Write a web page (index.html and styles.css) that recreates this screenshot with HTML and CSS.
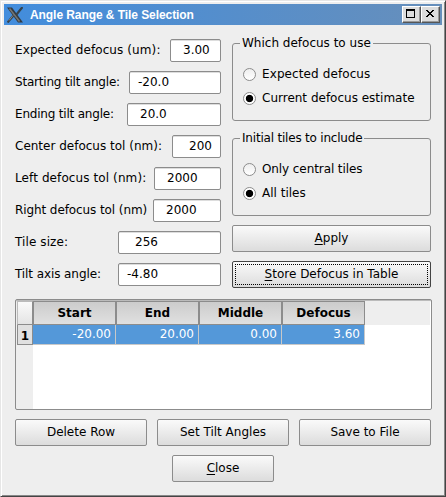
FILE: index.html
```html
<!DOCTYPE html>
<html lang="en">
<head>
<meta charset="utf-8">
<title>Angle Range &amp; Tile Selection</title>
<link rel="stylesheet" href="styles.css">
</head>
<body>
<div class="window">
  <header class="titlebar">
    <svg class="logo" width="16" height="16" viewBox="0 0 16 16">
      <path d="M0 0.5h5L16 15.5h-5z" fill="#333b43"/>
      <path d="M15.5 0L9.5 7.5M6.5 8.5L0.5 15.5" stroke="#36434e" stroke-width="2.2"/>
      <path d="M2.5 1.5L12.5 14.5" stroke="#777773" stroke-width="1.5"/>
      <path d="M6 8.5L2 13.5" stroke="#8b8880" stroke-width="1"/>
    </svg>
    <h1 class="title"><span>Angle Range &amp; Tile Selection</span></h1>
    <div class="controls">
      <span class="control"><svg width="16" height="14" viewBox="0 0 16 14"><path d="M3 2h9v9H3zM4 4v6h7V4z" fill="#000" fill-rule="evenodd"/></svg></span>
      <span class="control"><svg width="16" height="14" viewBox="0 0 16 14"><path d="M4 3h2v1h1v1h2V4h1V3h2v1h-1v1h-1v1H9v1h1v1h1v1h1v1h-2V9H9V8H7v1H6v1H4V9h1V8h1V7h1V6H6V5H5V4H4z" fill="#000"/></svg></span>
    </div>
  </header>
  <main class="content">
    <div class="top">
      <div class="fields">
        <div class="field"><label class="wide">Expected defocus (um):</label><span class="input w51 p12">3.00</span></div>
        <div class="field"><label class="tight">Starting tilt angle:</label><span class="input w92 p8">-20.0</span></div>
        <div class="field"><label class="tight">Ending tilt angle:</label><span class="input w94 p12">20.0</span></div>
        <div class="field"><label>Center defocus tol (nm):</label><span class="input w49 p16">200</span></div>
        <div class="field"><label class="wide">Left defocus tol (nm):</label><span class="input w67 p12">2000</span></div>
        <div class="field"><label class="snug">Right defocus tol (nm)</label><span class="input w68 p12">2000</span></div>
        <div class="field"><label class="wide">Tile size:</label><span class="input w103 p16">256</span></div>
        <div class="field"><label class="snug">Tilt axis angle:</label><span class="input w103 p8">-4.80</span></div>
      </div>
      <div class="options">
        <fieldset class="group">
          <legend>Which defocus to use</legend>
          <div class="radio wide"><i class="dot"></i>Expected defocus</div>
          <div class="radio"><i class="dot on"></i>Current defocus estimate</div>
        </fieldset>
        <fieldset class="group">
          <legend class="tight">Initial tiles to include</legend>
          <div class="radio snug"><i class="dot"></i>Only central tiles</div>
          <div class="radio"><i class="dot on"></i>All tiles</div>
        </fieldset>
        <div class="button"><span><u>A</u>pply</span></div>
        <div class="button focused"><span><u>S</u>tore Defocus in Table</span></div>
      </div>
    </div>
    <div class="table">
      <div class="row head"><b class="corner"></b><b>Start</b><b>End</b><b>Middle</b><b>Defocus</b><i></i></div>
      <div class="row data"><b>1</b><span>-20.00</span><span>20.00</span><span>0.00</span><span>3.60</span></div>
    </div>
    <div class="actions">
      <div class="button">Delete Row</div>
      <div class="button">Set Tilt Angles</div>
      <div class="button">Save to File</div>
    </div>
    <div class="button close"><span><u>C</u>lose</span></div>
  </main>
</div>
</body>
</html>
```
FILE: styles.css
```css
* { box-sizing: border-box; }
body { margin: 0; font: 12px/14px "DejaVu Sans", sans-serif; color: #000; }
.window {
  width: 446px; height: 497px; padding: 2px; background: #eee;
  border: 1px solid #e6e6e6; border-right-color: #444; border-bottom-color: #444;
  box-shadow: inset 1px 1px #fff, inset -1px -1px #888;
}
.titlebar {
  display: flex; align-items: center; height: 21px; margin: 1px 1px 0;
  padding: 0 2px 0 3px; background: linear-gradient(90deg, #428ddd, #678fbb);
}
.logo { margin-top: 1px; }
.title { margin: 1px 0 0 7px; flex: 1; font: bold 12px/14px "Liberation Sans", sans-serif; letter-spacing: -0.07px; color: #fff; white-space: nowrap; }
.controls { display: flex; }
.control {
  width: 19px; height: 17px; background: #dcdcdc; border: 1px solid #fff;
  border-right-color: #555; border-bottom-color: #555; box-shadow: inset -1px -1px #999;
}
.control svg { display: block; }
.content { padding: 14px 11px 0 12px; }
.top { display: flex; gap: 11px; }
.fields { width: 206px; display: flex; flex-direction: column; gap: 9px; }
.field { display: flex; justify-content: space-between; height: 23px; white-space: nowrap; }
.field label { padding-top: 4px; }
.wide { letter-spacing: 0.1px; }
.snug { letter-spacing: -0.09px; }
.tight { letter-spacing: -0.2px; }
.input { height: 23px; padding-top: 3px; background: #fff; border: 1px solid #8c8c8c; border-radius: 2px; box-shadow: inset 0 1px #ddd; }
.w49 { width: 49px; } .w51 { width: 51px; } .w67 { width: 67px; } .w68 { width: 68px; }
.w92 { width: 92px; } .w94 { width: 94px; } .w103 { width: 103px; }
.p8 { padding-left: 8px; } .p12 { padding-left: 12px; } .p16 { padding-left: 16px; }
.options { width: 199px; }
.group {
  height: 85px; margin: -3px 0 13px; padding: 12px 0 0 10px;
  border: 1px solid #8c8c8c; border-radius: 3px; min-width: 0;
}
.group + .group { margin-bottom: 9px; }
.group legend { margin-left: -3px; padding: 0 2px; }
.radio { display: flex; align-items: center; height: 24px; white-space: nowrap; }
.dot {
  width: 13px; height: 13px; margin: 1px 6px 0 0; border: 1px solid #8c8c8c; border-radius: 50%;
  background: linear-gradient(#eee, #fff);
}
.dot.on { background: radial-gradient(circle, #000 3.3px, #fff 4.1px); }
.button {
  display: flex; align-items: center; justify-content: center; height: 27px; padding-bottom: 2px;
  border: 1px solid #8c8c8c; border-radius: 2px; background: linear-gradient(#fafafa, #dcdcdc);
}
u { text-underline-offset: 2px; }
.options .button { margin-bottom: 9px; }
.focused { border-color: #444; padding: 2px; }
.focused span { display: flex; flex: 1; height: 21px; justify-content: center; padding-top: 2px; border: 1px dotted #000; white-space: pre; }
.options .focused { margin-bottom: 0; }
.table { height: 111px; margin-top: 11px; padding: 1px; border: 1px solid #8c8c8c; border-radius: 2px; background: linear-gradient(90deg, #eee 17px, #fff 17px); box-shadow: inset 0 1px #bbb; }
.row { display: grid; grid-template-columns: 16px repeat(4, 83px) 1fr; }
.head { height: 24px; }
.head b { padding-top: 4px; text-align: center; background: linear-gradient(#ccc, #e0e0e0); border: 1px solid #8c8c8c; }
.head .corner { background: linear-gradient(#fafafa, #e4e4e4); border-color: #bbb #8c8c8c #8c8c8c #bbb; }
.head i { background: #eee; }
.data { height: 20px; }
.data b { padding-top: 4px; text-align: center; background: #e0e0e0; border: 1px solid #8c8c8c; border-top: 0; }
.data span { padding: 2px 4px 0 0; text-align: right; color: #fff; background: #5498d9; border: solid #c8c8c8; border-width: 0 1px 1px 0; }
.actions { display: flex; gap: 10px; margin-top: 9px; }
.actions .button { width: 132px; }
.close { width: 102px; margin: 9px 0 0 157px; }
```
